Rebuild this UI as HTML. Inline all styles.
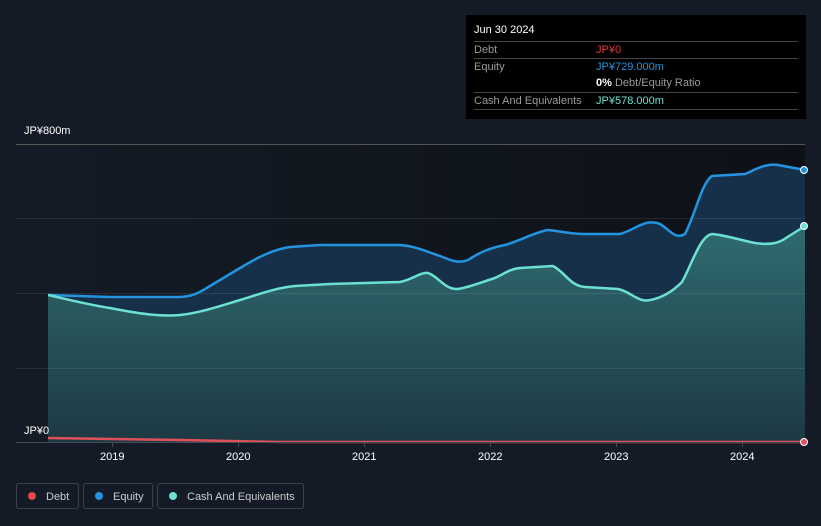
<!DOCTYPE html>
<html><head><meta charset="utf-8"><style>
body{margin:0;width:821px;height:526px;background:#151b26;font-family:"Liberation Sans",sans-serif;overflow:hidden;position:relative}
.tt{position:absolute;left:466px;top:15px;width:340px;height:104px;background:#000;color:#fff;font-size:11px}
.row{position:absolute;left:8px;width:324px;border-top:1px solid #444;height:17px}
.lbl{position:absolute;left:0;top:2px;color:#9a9a9a}
.val{position:absolute;left:122px;top:2px}
.leg{position:absolute;top:483px;height:26px;border:1px solid #3a414c;border-radius:3px;color:#ccc;font-size:11px;line-height:26px;box-sizing:border-box}
.dot{display:inline-block;width:8px;height:8px;border-radius:50%;margin:0 10px 0 11px;vertical-align:-0px}
.ax{position:absolute;color:#fff;font-size:11px}
</style></head><body>
<svg width="821" height="526" style="position:absolute;left:0;top:0">
<defs><linearGradient id="g" x1="0" y1="0" x2="0" y2="1"><stop offset="0" stop-color="#2f6b70"/><stop offset="1" stop-color="#1d3943"/></linearGradient>
<linearGradient id="h" x1="0" y1="0" x2="1" y2="0"><stop offset="0" stop-color="#151b26"/><stop offset="0.35" stop-color="#121820"/><stop offset="1" stop-color="#0d1117"/></linearGradient></defs>
<rect x="48" y="144" width="757" height="298" fill="url(#h)"/>
<path d="M48,295 L110,297 L180,297 C195,296 200,292 210,286 L240,268 C260,256 275,249 290,247 L320,245 L400,245 C415,246 425,251 440,256 C450,260 458,264 468,260 C480,252 490,248 505,245 C520,241 535,232 548,230 C560,231 570,234 585,234 L620,234 C635,230 645,218 660,224 C670,230 675,240 685,234 C695,215 702,182 712,176 L745,174 C755,170 765,163 778,165 L805,170 L805,442 L48,442 Z" fill="#16304a"/>
<path d="M48,295 C70,300 90,305 110,308 C135,313 160,317 180,315 C200,313 220,306 240,300 C260,294 275,288 295,286 L330,284 L400,282 C412,280 420,272 428,273 C438,276 445,290 458,289 C470,287 482,282 492,279 C502,276 508,269 520,268 L553,266 C565,272 570,286 585,287 L618,289 C632,292 638,303 650,300 C662,298 672,292 682,282 C692,264 700,236 712,234 C725,235 740,240 755,243 C768,245 778,244 786,238 L805,226 L805,442 L48,442 Z" fill="url(#g)"/>
<g stroke="#ffffff" stroke-opacity="0.09" stroke-width="1"><line x1="16" y1="218.5" x2="805" y2="218.5"/><line x1="16" y1="293.5" x2="805" y2="293.5"/><line x1="16" y1="368.5" x2="805" y2="368.5"/></g>
<line x1="16" y1="144.5" x2="805" y2="144.5" stroke="#555"/>
<path d="M48,295 L110,297 L180,297 C195,296 200,292 210,286 L240,268 C260,256 275,249 290,247 L320,245 L400,245 C415,246 425,251 440,256 C450,260 458,264 468,260 C480,252 490,248 505,245 C520,241 535,232 548,230 C560,231 570,234 585,234 L620,234 C635,230 645,218 660,224 C670,230 675,240 685,234 C695,215 702,182 712,176 L745,174 C755,170 765,163 778,165 L805,170" fill="none" stroke="#2394e0" stroke-width="2.5"/>
<path d="M48,295 C70,300 90,305 110,308 C135,313 160,317 180,315 C200,313 220,306 240,300 C260,294 275,288 295,286 L330,284 L400,282 C412,280 420,272 428,273 C438,276 445,290 458,289 C470,287 482,282 492,279 C502,276 508,269 520,268 L553,266 C565,272 570,286 585,287 L618,289 C632,292 638,303 650,300 C662,298 672,292 682,282 C692,264 700,236 712,234 C725,235 740,240 755,243 C768,245 778,244 786,238 L805,226" fill="none" stroke="#6ce0d2" stroke-width="2.5"/>
<path d="M48,438 L180,440 L280,442 L805,442" fill="none" stroke="#e0505a" stroke-width="2.5"/>
<line x1="16" y1="442.5" x2="805" y2="442.5" stroke="#444b55"/>
<g stroke="#444b55"><line x1="112.5" y1="443" x2="112.5" y2="447"/><line x1="238.5" y1="443" x2="238.5" y2="447"/><line x1="364.5" y1="443" x2="364.5" y2="447"/><line x1="490.5" y1="443" x2="490.5" y2="447"/><line x1="616.5" y1="443" x2="616.5" y2="447"/><line x1="742.5" y1="443" x2="742.5" y2="447"/></g>
<circle cx="804" cy="170" r="3.5" fill="#2394e0" stroke="#fff" stroke-width="1"/>
<circle cx="804" cy="226" r="3.5" fill="#6ce0d2" stroke="#fff" stroke-width="1"/>
<circle cx="804" cy="442" r="3.5" fill="#e0505a" stroke="#fff" stroke-width="1"/>
</svg>
<div class="ax" style="left:24px;top:125px">JP¥800m</div>
<div class="ax" style="left:24px;top:425px">JP¥0</div>
<div class="ax" style="left:100px;top:451px">2019</div>
<div class="ax" style="left:226px;top:451px">2020</div>
<div class="ax" style="left:352px;top:451px">2021</div>
<div class="ax" style="left:478px;top:451px">2022</div>
<div class="ax" style="left:604px;top:451px">2023</div>
<div class="ax" style="left:730px;top:451px">2024</div>
<div class="tt">
<div style="position:absolute;left:8px;top:9px">Jun 30 2024</div>
<div class="row" style="top:26px"><span class="lbl">Debt</span><span class="val" style="color:#e5363d">JP¥0</span></div>
<div class="row" style="top:43px"><span class="lbl">Equity</span><span class="val" style="color:#2394e0">JP¥729.000m</span></div>
<div class="row" style="top:60px;border-top:none"><span class="val"><b>0%</b> <span style="color:#9a9a9a">Debt/Equity Ratio</span></span></div>
<div class="row" style="top:77px"><span class="lbl">Cash And Equivalents</span><span class="val" style="color:#6ce0d2">JP¥578.000m</span></div>
<div class="row" style="top:94px;height:0"></div>
</div>
<div class="leg" style="left:16px;width:63px"><span class="dot" style="background:#e5444b"></span>Debt</div>
<div class="leg" style="left:83px;width:70px"><span class="dot" style="background:#2394e0"></span>Equity</div>
<div class="leg" style="left:157px;width:147px"><span class="dot" style="background:#6ce0d2"></span>Cash And Equivalents</div>
</body></html>
